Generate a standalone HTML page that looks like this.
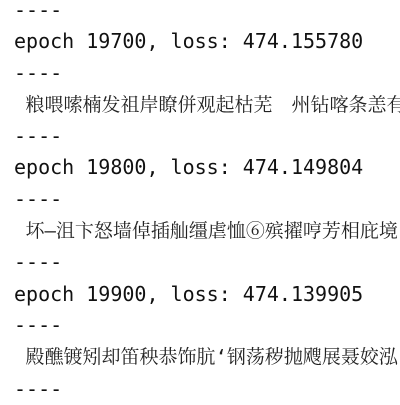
<!DOCTYPE html>
<html><head><meta charset="utf-8"><style>
html,body{margin:0;padding:0;background:#fff;width:400px;height:400px;overflow:hidden}
pre{margin:0;position:absolute;left:14px;top:-5px;font-family:"DejaVu Sans Mono","Liberation Mono",monospace;font-size:20px;line-height:31.3px;color:#111;white-space:pre}
.c{font-family:"DejaVu Sans Mono","Noto Serif CJK SC",serif;font-size:19px;color:#222}
</style></head><body>
<pre>----
epoch 19700, loss: 474.155780
----
<span class="c"> 粮喂嗦楠发祖岸瞭併观起枯芜　州钻喀条恙有</span>
----
epoch 19800, loss: 474.149804
----
<span class="c"> 坏—沮卞怒墙倬插舢缰虐恤⑥殡擢哼芳相庇境</span>
----
epoch 19900, loss: 474.139905
----
<span class="c"> 殿醮镀矧却笛秧恭饰肮‘钢荡秽抛飕展聂姣泓</span>
----</pre>
</body></html>
